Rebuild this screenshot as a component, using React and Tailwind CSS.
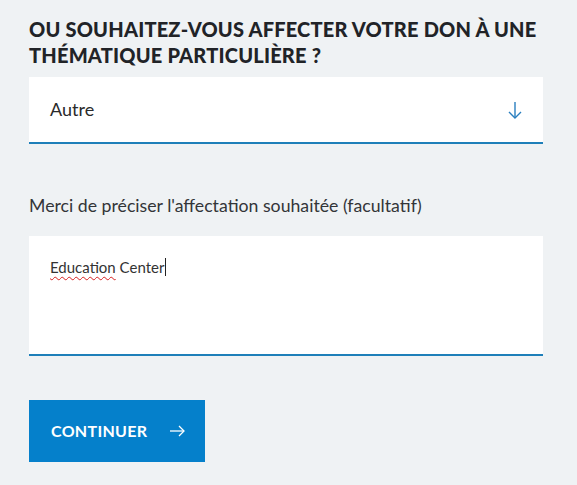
import React from "react";

export default function App() {
  return (
    <div className="min-h-[485px] w-full bg-[#eff2f4] px-[29px] pt-[16px] font-['Lato',sans-serif] text-[#222428]">
      {/* Question */}
      <h2 className="text-[20px] font-black uppercase leading-[26px] tracking-[0.2px] text-[#212327]">
        Ou souhaitez-vous affecter votre don à une thématique particulière ?
      </h2>

      {/* Select */}
      <div className="mt-[9px] flex h-[67px] w-[514px] items-center justify-between border-b-[2px] border-[#1e7fb9] bg-white pl-[21px] pr-[21px]">
        <span className="text-[18px] text-[#2a2a2a]">Autre</span>
        <svg width="14" height="18" viewBox="0 0 14 18" fill="none" stroke="#2a7fbf" strokeWidth="1.4">
          <path d="M7 1v16" />
          <path d="M1 11l6 6 6-6" />
        </svg>
      </div>

      {/* Label */}
      <p className="mt-[50px] text-[17.7px] leading-[24px] text-[#333538]">
        Merci de préciser l'affectation souhaitée (facultatif)
      </p>

      {/* Textarea */}
      <div className="mt-[18px] h-[120px] w-[514px] border-b-[2px] border-[#1e7fb9] bg-white px-[21px] pt-[19px]">
        <div className="text-[15px] leading-[22px] text-[#333]">
          <span className="underline decoration-wavy decoration-[#d62020] decoration-1 underline-offset-[3px]">
            Education
          </span>{" "}
          Center
          <span className="ml-[1px] inline-block h-[18px] w-px translate-y-[3px] bg-[#222]" />
        </div>
      </div>

      {/* Button */}
      <button className="mt-[44px] flex h-[62px] w-[176px] items-center gap-[22px] bg-[#0580cb] pl-[22px] text-[16px] font-bold uppercase tracking-[0.3px] text-white">
        Continuer
        <svg width="16" height="12" viewBox="0 0 16 12" fill="none" stroke="white" strokeWidth="1.3">
          <path d="M1 6h14" />
          <path d="M10 1l5 5-5 5" />
        </svg>
      </button>
    </div>
  );
}
